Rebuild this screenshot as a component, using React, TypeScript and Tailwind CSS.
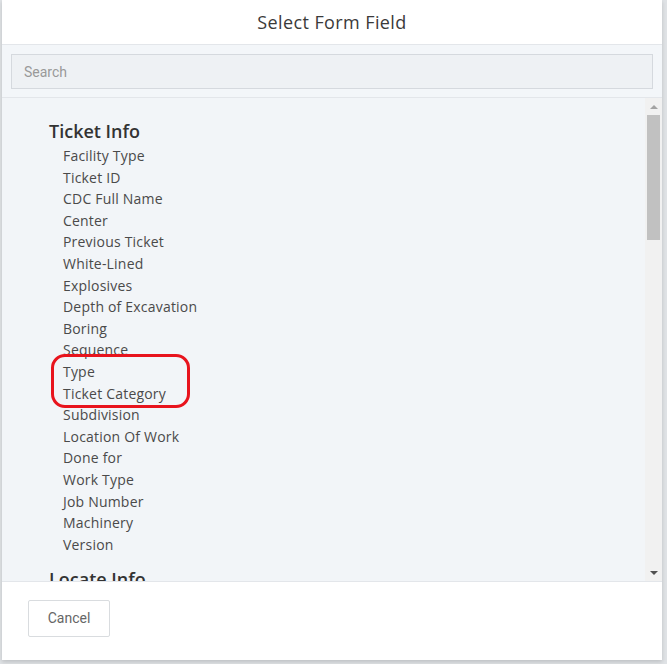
import React from "react";

const ticketFields = [
    "Facility Type",
    "Ticket ID",
    "CDC Full Name",
    "Center",
    "Previous Ticket",
    "White-Lined",
    "Explosives",
    "Depth of Excavation",
    "Boring",
    "Sequence",
    "Type",
    "Ticket Category",
    "Subdivision",
    "Location Of Work",
    "Done for",
    "Work Type",
    "Job Number",
    "Machinery",
    "Version",
];

function Scrollbar() {
    return (
        <div className="w-[17px] shrink-0 bg-[#f1f1f1] flex flex-col items-center">
            <div className="h-[17px] flex items-center justify-center">
                <div className="w-0 h-0 border-l-[4px] border-r-[4px] border-b-[4px] border-l-transparent border-r-transparent border-b-[#a3a3a3]" />
            </div>
            <div className="w-[13px] h-[125px] bg-[#c1c1c1]" />
            <div className="flex-1" />
            <div className="h-[17px] flex items-center justify-center">
                <div className="w-0 h-0 border-l-[4px] border-r-[4px] border-t-[4px] border-l-transparent border-r-transparent border-t-[#505050]" />
            </div>
        </div>
    );
}

export default function App() {
    return (
        <div className="w-[667px] h-[664px] bg-[#dfe2e5] pl-[2px] overflow-hidden">
            <div className="w-[660px] h-[660px] bg-white flex flex-col shadow-[0_2px_4px_rgba(0,0,0,0.15)]">
                <div className="h-[45px] shrink-0 border-b border-[#e3e6ea] flex items-center justify-center">
                    <h2 className="text-[18px] text-[#3a3a3a] font-normal tracking-[0.4px] font-['Open_Sans',sans-serif]">
                        Select Form Field
                    </h2>
                </div>

                <div className="h-[53px] shrink-0 bg-[#f3f6f9] border-b border-[#e3e6ea] px-[9px] pt-[9px]">
                    <input
                        placeholder="Search"
                        className="w-full h-[35px] bg-[#eef1f4] border border-[#d5d9de] px-3 text-[14px] text-[#555] placeholder:text-[#999] outline-none font-['Roboto',sans-serif]"
                    />
                </div>

                <div className="flex-1 min-h-0 flex bg-[#f2f5f8] relative">
                    <div className="flex-1 overflow-hidden pl-[47px] pt-[21px] font-['Open_Sans',sans-serif]">
                        <h3 className="text-[18px] leading-[24px] font-semibold text-[#333] mb-[2px]">
                            Ticket Info
                        </h3>
                        <ul className="pl-[14px]">
                            {ticketFields.map((field) => (
                                <li key={field} className="text-[14px] leading-[21.6px] tracking-[0.2px] text-[#4a4a4a]">
                                    {field}
                                </li>
                            ))}
                        </ul>
                        <h3 className="text-[18px] leading-[24px] font-semibold text-[#333] mt-[12px]">
                            Locate Info
                        </h3>
                    </div>
                    <Scrollbar />

                    {/* red highlight drawn over the list */}
                    <div className="absolute left-[49px] top-[256px] w-[139px] h-[54px] border-[3.5px] border-[#e8141d] rounded-[14px]" />
                </div>

                <div className="h-[79px] shrink-0 border-t border-[#e3e6ea] pl-[26px] pt-[18px]">
                    <button className="w-[82px] h-[37px] border border-[#d9dcdf] rounded-[2px] bg-white text-[14px] text-[#666] font-['Roboto',sans-serif]">
                        Cancel
                    </button>
                </div>
            </div>
        </div>
    );
}
